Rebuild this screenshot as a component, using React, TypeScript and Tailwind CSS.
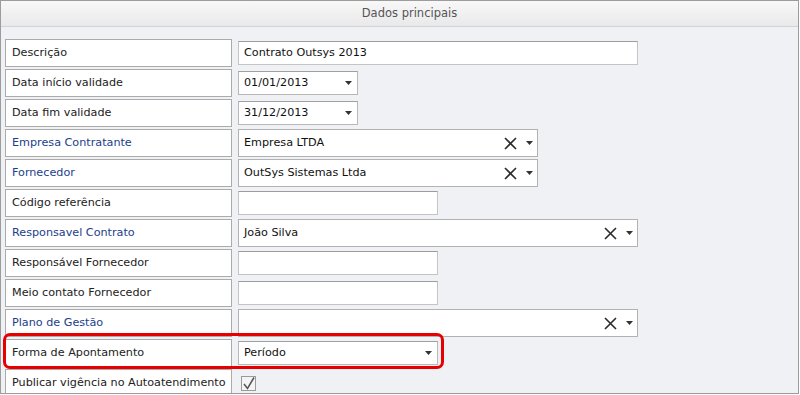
import React from 'react';

type Kind = 'text' | 'date' | 'combo' | 'check' | 'select';

interface Row {
  label: string;
  blue?: boolean;
  kind: Kind;
  value?: string;
  width: string;
}

const rows: Row[] = [
  { label: 'Descrição', kind: 'text', value: 'Contrato Outsys 2013', width: 'w-[400px]' },
  { label: 'Data início validade', kind: 'date', value: '01/01/2013', width: 'w-[120px]' },
  { label: 'Data fim validade', kind: 'date', value: '31/12/2013', width: 'w-[120px]' },
  { label: 'Empresa Contratante', blue: true, kind: 'combo', value: 'Empresa LTDA', width: 'w-[300px]' },
  { label: 'Fornecedor', blue: true, kind: 'combo', value: 'OutSys Sistemas Ltda', width: 'w-[300px]' },
  { label: 'Código referência', kind: 'text', width: 'w-[200px]' },
  { label: 'Responsavel Contrato', blue: true, kind: 'combo', value: 'João Silva', width: 'w-[400px]' },
  { label: 'Responsável Fornecedor', kind: 'text', width: 'w-[200px]' },
  { label: 'Meio contato Fornecedor', kind: 'text', width: 'w-[200px]' },
  { label: 'Plano de Gestão', blue: true, kind: 'combo', width: 'w-[400px]' },
  { label: 'Forma de Apontamento', kind: 'select', value: 'Período', width: 'w-[200px]' },
  { label: 'Publicar vigência no Autoatendimento', kind: 'check', width: 'w-[20px]' },
];

function Caret() {
  return (
    <svg width="7" height="4" viewBox="0 0 7 4" className="shrink-0">
      <path d="M0 0H7L3.5 4Z" fill="#333" />
    </svg>
  );
}

function Clear() {
  return (
    <svg width="13" height="13" viewBox="0 0 13 13" className="shrink-0">
      <path d="M1 1L12 12M12 1L1 12" stroke="#2a2a2a" strokeWidth="1.6" />
    </svg>
  );
}

function Value({ row }: { row: Row }) {
  if (row.kind === 'check') {
    return (
      <div className="flex items-center h-full pl-[3px]">
        <div className="w-[15px] h-[15px] border border-[#9a9a9a] bg-[#f4f4f4] flex items-center justify-center">
          <svg width="13" height="13" viewBox="0 0 13 13">
            <path d="M2 7L5.5 11.5L12 0.5" stroke="#555" strokeWidth="1.5" fill="none" />
          </svg>
        </div>
      </div>
    );
  }
  if (row.kind === 'combo') {
    return (
      <div className={`${row.width} h-full bg-white border border-[#b2b2b2] flex items-center pl-[5px] pr-[4px]`}>
        <span className="flex-1 text-[#111]">{row.value}</span>
        <Clear />
        <span className="ml-[9px] flex"><Caret /></span>
      </div>
    );
  }
  if (row.kind === 'date' || row.kind === 'select') {
    return (
      <div className="h-full flex items-center">
        <div className={`${row.width} h-[24px] bg-white border border-[#b8b8b8] border-t-[#a0a0a0] flex items-center pl-[5px] pr-[5px]`}>
          <span className="flex-1 text-[#111]">{row.value}</span>
          <Caret />
        </div>
      </div>
    );
  }
  return (
    <div className="h-full flex items-center">
      <div className={`${row.width} h-[24px] bg-white border border-[#c4c4c4] border-t-[#9c9c9c] flex items-center pl-[5px]`}>
        <span className="text-[#111]">{row.value}</span>
      </div>
    </div>
  );
}

export default function App() {
  return (
    <div
      className="relative w-[800px] h-[395px] overflow-hidden bg-white text-[11.2px]"
      style={{ fontFamily: '"DejaVu Sans", Verdana, sans-serif' }}
    >
      <div className="w-[799px] h-[394px] border border-[#9c9c9c] bg-[#f0f1f5] flex flex-col overflow-hidden">
        {/* Header */}
        <div className="h-[26px] shrink-0 border-b border-[#d2d3d6] bg-gradient-to-b from-[#f8f8f8] to-[#e9e9eb] flex items-center justify-center pl-[20px] text-[#555] text-[11.5px]">
          Dados principais
        </div>

        {/* Form rows */}
        <div className="flex flex-col gap-[2px] pt-[12px] pl-[4px]">
          {rows.map((row) => (
            <div key={row.label} className="flex gap-[6px] h-[28px] shrink-0">
              <div
                className={`w-[227px] shrink-0 h-full bg-white border border-[#ababab] flex items-center pl-[6px] pt-[1px] whitespace-nowrap ${
                  row.blue ? 'text-[#1c3e8c]' : 'text-[#222]'
                }`}
              >
                {row.label}
              </div>
              <Value row={row} />
            </div>
          ))}
        </div>
      </div>

      {/* Highlight annotation */}
      <div className="absolute left-[3px] top-[333px] w-[441px] h-[36px] border-[3px] border-[#e60000] rounded-[7px]" />
    </div>
  );
}
